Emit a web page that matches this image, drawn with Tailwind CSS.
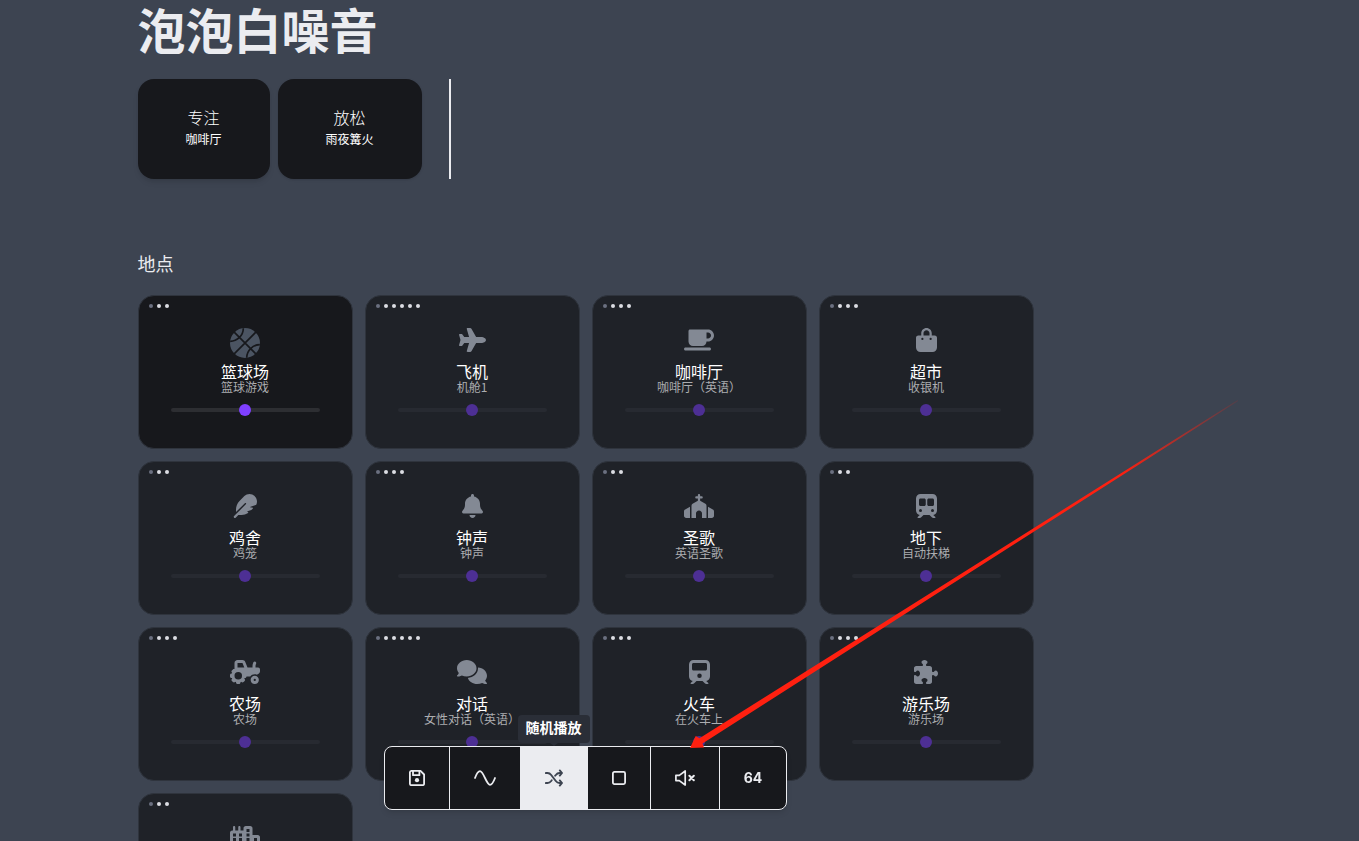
<!DOCTYPE html>
<html lang="zh-CN">
<head>
    <meta charset="UTF-8">
    <meta name="viewport" content="width=device-width, initial-scale=1.0">
    <title>泡泡白噪音</title>
    <script src="https://cdn.jsdelivr.net/npm/@tailwindcss/browser@4"></script>
</head>
<body class="relative min-h-screen overflow-x-hidden bg-[#3d4451] font-['Noto_Sans_CJK_SC',sans-serif] text-[#ebecf0]">
    <main class="mx-auto max-w-[1084px] pt-1 pb-28">
        <h1 class="text-5xl leading-[48px] font-bold">泡泡白噪音</h1>

        <!-- Presets -->
        <div class="mt-[27px] flex">
            <button class="h-[100px] rounded-2xl bg-[#17181c] px-12 pb-1 text-center text-white shadow-md">
                <span class="block text-base leading-6 font-light">专注</span>
                <span class="block text-xs leading-5">咖啡厅</span>
            </button>
            <button class="ml-2 h-[100px] rounded-2xl bg-[#17181c] px-12 pb-1 text-center text-white shadow-sm">
                <span class="block text-base leading-6 font-light">放松</span>
                <span class="block text-xs leading-5">雨夜篝火</span>
            </button>
            <div class="ml-[27px] w-0.5 bg-[#ebecf0]"></div>
        </div>

        <section class="mt-[70px] max-w-4xl">
            <h2 class="text-lg leading-7">地点</h2>
            <div id="sounds" class="mt-[18px] grid grid-cols-4 gap-3"></div>
        </section>
    </main>

    <!-- Player bar -->
    <div class="fixed inset-x-0 bottom-[31px] mx-auto max-w-[1084px]">
        <div class="flex max-w-4xl justify-center">
            <div class="flex h-16 rounded-lg border border-[#ebecf0] bg-[#17181c] shadow-md">
                <button aria-label="保存" class="px-6">
                    <svg class="h-4 w-4" viewBox="0 0 16 16" fill="none" stroke="currentColor" stroke-width="1.8" stroke-linejoin="round">
                        <path d="M2.3 .9h9.2l3.6 3.6v9.2a1.5 1.5 0 0 1-1.5 1.500H2.300a1.500 1.500 0 0 1-1.400-1.500V2.300A1.500 1.500 0 0 1 2.300 .9z"/>
                        <path d="M4 1v4.200h6.400V1"/>
                        <circle cx="8" cy="10.200" r="2.100" fill="currentColor" stroke="none"/>
                    </svg>
                </button>
                <button aria-label="波形" class="border-l border-[#ebecf0] px-6">
                    <svg class="h-4 w-[22px]" viewBox="0 0 22 16" fill="none" stroke="currentColor" stroke-width="1.8" stroke-linecap="round">
                        <path d="M1 8C2.5 4 4 1.2 6 1.2 9.5 1.2 12.5 14.8 16 14.8c2 0 3.5-2.8 5-6.8"/>
                    </svg>
                </button>
                <div class="relative flex">
                    <button aria-label="随机播放" class="border-l border-[#ebecf0] bg-[#ebecf0] px-6 text-[#3d4451]">
                        <svg class="h-[18px] w-[18px]" viewBox="0 0 18 18" fill="none" stroke="currentColor" stroke-width="1.9" stroke-linecap="round" stroke-linejoin="round">
                            <path d="M.9 4h1.6c1.7 0 2.8.8 3.7 2l4.6 6c.9 1.2 2 2 3.7 2H17M.9 14h1.6c1.7 0 2.8-.8 3.7-2l.5-.7M10.2 6.7l.6-.7c.9-1.2 2-2 3.7-2H17M14.8 1.4L17 4l-2.2 2.6M14.8 11.4L17 14l-2.2 2.6"/>
                        </svg>
                    </button>
                    <div role="tooltip" class="absolute bottom-full left-1/2 mb-1 -translate-x-1/2 rounded bg-[#2a2e37] px-2 pt-0.5 pb-1.5 text-sm leading-5 font-bold whitespace-nowrap text-white">
                        随机播放
                        <span class="absolute top-full left-1/2 -translate-x-1/2 border-x-4 border-t-[3px] border-x-transparent border-t-[#2a2e37]"></span>
                    </div>
                </div>
                <button aria-label="停止" class="border-l border-[#ebecf0] px-6">
                    <svg class="h-3.5 w-3.5" viewBox="0 0 14 14" fill="none" stroke="currentColor" stroke-width="1.8">
                        <rect x=".9" y=".9" width="12.2" height="12.2" rx="1.5"/>
                    </svg>
                </button>
                <button aria-label="静音" class="border-l border-[#ebecf0] px-6">
                    <svg class="h-4 w-5" viewBox="0 0 20 16" fill="none" stroke="currentColor" stroke-width="1.7" stroke-linejoin="round" stroke-linecap="round">
                        <path d="M.9 5.400h3.400L10.200 1v14l-5.900-4.400H.9z"/>
                        <path stroke-width="2" d="M14.400 5.800L18.800 10.200M18.800 5.800l-4.400 4.400"/>
                    </svg>
                </button>
                <button aria-label="音量" class="min-w-[67px] rounded-r-lg border-l border-[#ebecf0] font-[Inter,sans-serif] text-sm font-bold">64</button>
            </div>
        </div>
    </div>

    <!-- Pointer arrow -->
    <svg class="pointer-events-none absolute top-0 left-0 h-[841px] w-[1359px]" viewBox="0 0 1359 841" aria-hidden="true">
        <defs>
            <linearGradient id="arrowFade" gradientUnits="userSpaceOnUse" x1="1238" y1="400" x2="1120" y2="475">
                <stop offset="0" stop-color="#ff2010" stop-opacity=".1"/>
                <stop offset="1" stop-color="#ff2010"/>
            </linearGradient>
        </defs>
        <path fill="url(#arrowFade)" d="M690 748l5.700-12 3.800 2.300L1237.600 400l.6 1L702.500 743.500l1.500 4z"/>
    </svg>

    <!-- Icons -->
    <svg class="hidden">
        <symbol id="basketball" viewBox="0 0 90 90">
            <circle cx="45" cy="45" r="45"/>
            <path d="M12.500 12.500l65 65M77.500 12.500l-65 65M40 .5A40 40 0 0 1 .5 40M50 89.500A40 40 0 0 1 89.500 50" fill="none" stroke="#17181c" stroke-width="5"/>
        </symbol>
        <symbol id="plane" viewBox="0 0 576 512"><path d="M482.3 192c34.2 0 93.7 29 93.7 64c0 36-59.5 64-93.7 64l-116.6 0L265.2 495.9c-5.7 10-16.3 16.1-27.8 16.1l-56.2 0c-10.6 0-18.3-10.2-15.4-20.4l49-171.6L112 320 68.8 377.6c-3 4-7.8 6.4-12.8 6.4l-42 0c-7.8 0-14-6.3-14-14c0-1.3 .2-2.6 .5-3.9L32 256 .5 145.9c-.4-1.3-.5-2.6-.5-3.9c0-7.8 6.3-14 14-14l42 0c5 0 9.8 2.4 12.8 6.4L112 192l102.9 0-49-171.6C162.9 10.2 170.6 0 181.2 0l56.2 0c11.5 0 22.1 6.2 27.8 16.1L365.7 192l116.6 0z"/></symbol>
        <symbol id="coffee" viewBox="0 0 640 512"><path d="M96 64c0-17.7 14.3-32 32-32l320 0 64 0c70.7 0 128 57.3 128 128s-57.3 128-128 128l-32 0c0 53-43 96-96 96l-192 0c-53 0-96-43-96-96L96 64zM480 224l32 0c35.3 0 64-28.7 64-64s-28.7-64-64-64l-32 0 0 128zM32 416l512 0c17.7 0 32 14.3 32 32s-14.3 32-32 32L32 480c-17.7 0-32-14.3-32-32s14.3-32 32-32z"/></symbol>
        <symbol id="bag" viewBox="0 0 448 512"><path d="M160 112c0-35.3 28.7-64 64-64s64 28.7 64 64v48H160V112zm-48 48H48c-26.5 0-48 21.5-48 48V416c0 53 43 96 96 96H352c53 0 96-43 96-96V208c0-26.5-21.5-48-48-48H336V112C336 50.1 285.9 0 224 0S112 50.1 112 112v48zm24 48a24 24 0 1 1 0 48 24 24 0 1 1 0-48zm152 24a24 24 0 1 1 48 0 24 24 0 1 1 -48 0z"/></symbol>
        <symbol id="feather" viewBox="0 0 512 512"><path d="M278.5 215.6L23 471c-9.4 9.4-9.4 24.6 0 33.9s24.6 9.4 33.9 0l57-57h68c49.7 0 97.9-14.4 139-41c11.1-7.2 5.5-23-7.8-23c-5.1 0-9.2-4.1-9.2-9.2c0-4.1 2.7-7.6 6.5-8.8l81-24.3c2.5-.8 4.8-2.1 6.7-4l22.4-22.4c10.1-10.1 2.9-27.3-11.3-27.3l-32.2 0c-5.1 0-9.2-4.1-9.2-9.2c0-4.1 2.7-7.6 6.5-8.8l112-33.6c4-1.2 7.4-3.9 9.3-7.7C506.4 207.6 512 184.1 512 160c0-41-16.3-80.3-45.3-109.3l-5.5-5.5C432.3 16.3 393 0 352 0s-80.3 16.3-109.3 45.3L139 149C91 197 64 262.1 64 330v55.3L253.6 195.8c6.2-6.2 16.4-6.2 22.6 0c5.4 5.4 6.1 13.6 2.2 19.8z"/></symbol>
        <symbol id="bell" viewBox="0 0 448 512"><path d="M224 0c-17.7 0-32 14.3-32 32V51.2C119 66 64 130.6 64 208v18.8c0 47-17.3 92.4-48.5 127.6l-7.4 8.3c-8.4 9.4-10.4 22.9-5.3 34.4S19.4 416 32 416H416c12.6 0 24-7.4 29.2-18.9s3.1-25-5.3-34.4l-7.4-8.3C401.3 319.2 384 273.9 384 226.8V208c0-77.4-55-142-128-156.8V32c0-17.7-14.3-32-32-32zm45.3 493.3c12-12 18.7-28.3 18.7-45.3H224 160c0 17 6.7 33.3 18.7 45.3s28.3 18.7 45.3 18.7s33.3-6.7 45.3-18.7z"/></symbol>
        <symbol id="church" viewBox="0 0 640 512"><path d="M344 24c0-13.3-10.7-24-24-24s-24 10.7-24 24V48H264c-13.3 0-24 10.7-24 24s10.7 24 24 24h32v46.4L183.3 210c-14.5 8.7-23.3 24.3-23.3 41.2V512h96V416c0-35.3 28.7-64 64-64s64 28.7 64 64v96h96V251.2c0-16.9-8.8-32.5-23.3-41.2L344 142.4V96h32c13.3 0 24-10.7 24-24s-10.7-24-24-24H344V24zM24.9 330.3C9.5 338.8 0 354.9 0 372.4V464c0 26.5 21.5 48 48 48h80V273.6L24.9 330.3zM592 512c26.5 0 48-21.5 48-48V372.4c0-17.5-9.5-33.6-24.9-42.1L512 273.6V512h80z"/></symbol>
        <symbol id="subway" viewBox="0 0 448 512"><path d="M96 0C43 0 0 43 0 96V352c0 48 35.2 87.7 81.1 94.9l-46 46C28.1 499.9 33.1 512 43 512H82.7c8.5 0 16.6-3.4 22.6-9.4L160 448H288l54.6 54.6c6 6 14.1 9.4 22.6 9.4H405c10 0 15-12.1 7.9-19.1l-46-46c46-7.1 81.1-46.9 81.1-94.9V96c0-53-43-96-96-96H96zM64 128c0-17.7 14.3-32 32-32h80c17.7 0 32 14.3 32 32v96c0 17.7-14.3 32-32 32H96c-17.7 0-32-14.3-32-32V128zM272 96h80c17.7 0 32 14.3 32 32v96c0 17.7-14.3 32-32 32H272c-17.7 0-32-14.3-32-32V128c0-17.7 14.3-32 32-32zM64 352a32 32 0 1 1 64 0 32 32 0 1 1 -64 0zm288-32a32 32 0 1 1 0 64 32 32 0 1 1 0-64z"/></symbol>
        <symbol id="tractor" viewBox="0 0 640 512"><path d="M96 64c0-35.3 28.7-64 64-64H266.3c26.2 0 49.7 15.9 59.4 40.2L373.7 160H480V126.2c0-24.8 5.8-49.3 16.9-71.6l2.5-5c7.9-15.8 27.1-22.2 42.9-14.3s22.2 27.1 14.3 42.9l-2.5 5c-6.7 13.3-10.1 28-10.1 42.9V160h56c22.1 0 40 17.9 40 40v45.4c0 16.5-8.5 31.9-22.6 40.7l-43.3 27.1c-14.2-5.9-29.8-9.2-46.1-9.2c-39.3 0-74.1 18.9-96 48H352c0 17.7-14.3 32-32 32h-8.2c-1.7 4.8-3.7 9.5-5.8 14.1l5.8 5.8c12.5 12.5 12.5 32.8 0 45.3l-22.6 22.6c-12.5 12.5-32.8 12.5-45.3 0l-5.8-5.8c-4.6 2.2-9.3 4.1-14.1 5.8V480c0 17.7-14.3 32-32 32H160c-17.7 0-32-14.3-32-32v-8.2c-4.8-1.7-9.5-3.7-14.1-5.8l-5.8 5.8c-12.5 12.5-32.8 12.5-45.3 0L40.2 449.1c-12.5-12.5-12.5-32.8 0-45.3l5.8-5.8c-2.2-4.6-4.1-9.3-5.8-14.1H32c-17.7 0-32-14.3-32-32V320c0-17.7 14.3-32 32-32h8.2c1.7-4.8 3.7-9.5 5.8-14.1l-5.8-5.8c-12.5-12.5-12.5-32.8 0-45.3l22.6-22.6c9-9 21.9-11.5 33.1-7.6V64zm170.3 0H160v96H304.7L266.3 64zM176 256a80 80 0 1 0 0 160 80 80 0 1 0 0-160zM528 448a24 24 0 1 0 0-48 24 24 0 1 0 0 48zm0 64c-48.6 0-88-39.4-88-88s39.4-88 88-88s88 39.4 88 88s-39.4 88-88 88z"/></symbol>
        <symbol id="comments" viewBox="0 0 640 512"><path d="M208 352c114.9 0 208-78.8 208-176S322.9 0 208 0S0 78.8 0 176c0 38.6 14.7 74.3 39.6 103.4c-3.5 9.4-8.7 17.7-14.2 24.7c-4.8 6.2-9.7 11-13.3 14.3c-1.8 1.6-3.3 2.9-4.3 3.7c-.5 .4-.9 .7-1.1 .8l-.2 .2C1 327.2-1.4 334.4 .8 340.9S9.1 352 16 352c21.8 0 43.8-5.6 62.1-12.5c9.2-3.5 17.8-7.4 25.2-11.4C134.1 343.3 169.8 352 208 352zM448 176c0 112.3-99.1 196.9-216.5 207C255.8 457.4 336.4 512 432 512c38.2 0 73.9-8.7 104.7-23.9c7.5 4 16 7.9 25.2 11.4c18.3 6.9 40.3 12.5 62.1 12.5c6.9 0 13.1-4.5 15.2-11.1c2.1-6.6-.2-13.8-5.8-17.9l-.2-.2c-.2-.2-.6-.4-1.1-.8c-1-.8-2.5-2-4.3-3.7c-3.6-3.3-8.5-8.1-13.3-14.3c-5.5-7-10.7-15.4-14.2-24.7c24.9-29 39.6-64.7 39.6-103.4c0-92.8-84.9-168.9-192.6-175.5c.4 5.1 .6 10.3 .6 15.5z"/></symbol>
        <symbol id="train" viewBox="0 0 448 512"><path d="M96 0C43 0 0 43 0 96V352c0 48 35.2 87.7 81.1 94.9l-46 46C28.1 499.9 33.1 512 43 512H82.7c8.5 0 16.6-3.4 22.6-9.4L160 448H288l54.6 54.6c6 6 14.1 9.4 22.6 9.4H405c10 0 15-12.1 7.9-19.1l-46-46c46-7.1 81.1-46.9 81.1-94.9V96c0-53-43-96-96-96H96zM64 96c0-17.7 14.3-32 32-32H352c17.7 0 32 14.3 32 32v96c0 17.7-14.3 32-32 32H96c-17.7 0-32-14.3-32-32V96zM224 288a48 48 0 1 1 0 96 48 48 0 1 1 0-96z"/></symbol>
        <symbol id="puzzle" viewBox="0 0 512 512"><path d="M192 104.8c0-9.2-5.8-17.3-13.2-22.8C167.2 73.3 160 61.3 160 48c0-26.5 28.7-48 64-48s64 21.5 64 48c0 13.3-7.2 25.3-18.8 34c-7.4 5.5-13.2 13.6-13.2 22.8c0 12.8 10.4 23.2 23.2 23.2H336c26.5 0 48 21.5 48 48v56.8c0 12.8 10.4 23.2 23.2 23.2c9.2 0 17.3-5.8 22.8-13.2c8.7-11.6 20.7-18.8 34-18.8c26.5 0 48 28.7 48 64s-21.5 64-48 64c-13.3 0-25.3-7.2-34-18.8c-5.5-7.4-13.6-13.2-22.8-13.2c-12.8 0-23.2 10.4-23.2 23.2V464c0 26.5-21.5 48-48 48H279.2c-12.8 0-23.2-10.4-23.2-23.2c0-9.2 5.8-17.3 13.2-22.8c11.6-8.7 18.8-20.7 18.8-34c0-26.5-28.7-48-64-48s-64 21.5-64 48c0 13.3 7.2 25.3 18.8 34c7.4 5.5 13.2 13.6 13.2 22.8c0 12.8-10.4 23.2-23.2 23.2H48c-26.5 0-48-21.5-48-48V343.2C0 330.4 10.4 320 23.2 320c9.2 0 17.3 5.8 22.8 13.2C54.7 344.8 66.7 352 80 352c26.5 0 48-28.7 48-64s-21.5-64-48-64c-13.3 0-25.3 7.2-34 18.8C40.5 250.2 32.4 256 23.2 256C10.4 256 0 245.6 0 232.8V176c0-26.5 21.5-48 48-48H168.8c12.8 0 23.2-10.4 23.2-23.2z"/></symbol>
        <symbol id="city" viewBox="0 0 640 512"><path d="M480 48c0-26.5-21.5-48-48-48H336c-26.5 0-48 21.5-48 48V96H224V24c0-13.3-10.7-24-24-24s-24 10.7-24 24V96H112V24c0-13.3-10.7-24-24-24S64 10.7 64 24V96H48C21.5 96 0 117.5 0 144V464c0 26.5 21.5 48 48 48H592c26.5 0 48-21.5 48-48V240c0-26.5-21.5-48-48-48H480V48zM64 160h64v64H64zM192 160h64v64h-64zM64 256h64v64H64zM192 256h64v64h-64zM64 352h64v64H64zM192 352h64v64h-64zM352 64h64v64h-64zM352 160h64v64h-64zM352 256h64v64h-64zM512 256h64v64h-64zM512 352h64v64h-64z"/></symbol>
    </svg>

    <script>
        const sounds = [
            { icon: 'basketball', size: 'h-[30px] w-[30px]', title: '篮球场', detail: '篮球游戏', variants: 2, active: true },
            { icon: 'plane', size: 'h-6 w-[27px]', title: '飞机', detail: '机舱1', variants: 5 },
            { icon: 'coffee', size: 'h-6 w-[30px]', title: '咖啡厅', detail: '咖啡厅（英语）', variants: 3 },
            { icon: 'bag', size: 'h-6 w-[21px]', title: '超市', detail: '收银机', variants: 3 },
            { icon: 'feather', size: 'h-6 w-6', title: '鸡舍', detail: '鸡笼', variants: 2 },
            { icon: 'bell', size: 'h-6 w-[21px]', title: '钟声', detail: '钟声', variants: 3 },
            { icon: 'church', size: 'h-6 w-[30px]', title: '圣歌', detail: '英语圣歌', variants: 2 },
            { icon: 'subway', size: 'h-6 w-[21px]', title: '地下', detail: '自动扶梯', variants: 2 },
            { icon: 'tractor', size: 'h-6 w-[30px]', title: '农场', detail: '农场', variants: 3 },
            { icon: 'comments', size: 'h-6 w-[30px]', title: '对话', detail: '女性对话（英语）', variants: 5 },
            { icon: 'train', size: 'h-6 w-[21px]', title: '火车', detail: '在火车上', variants: 3 },
            { icon: 'puzzle', size: 'h-6 w-6', title: '游乐场', detail: '游乐场', variants: 3 },
            { icon: 'city', size: 'h-6 w-[30px]', title: '', detail: '', variants: 2 },
        ];

        document.getElementById('sounds').innerHTML = sounds.map(s => `
            <article class="min-h-[154px] rounded-2xl border border-[#2f343d] pt-2 pb-9 ${s.active ? 'bg-[#17181c]' : 'bg-[#1f2228]'}">
                <div class="flex gap-1 px-2.5">
                    <span class="h-1 w-1 rounded-full bg-[#6b7080]"></span>
                    ${'<span class="h-1 w-1 rounded-full bg-[#dcdde3]"></span>'.repeat(s.variants)}
                </div>
                <button class="mt-5 block w-full text-center">
                    <span class="flex h-[30px] justify-center ${s.active ? 'text-[#4b5462]' : 'text-[#838994]'}">
                        <svg class="${s.size}" fill="currentColor" fill-rule="evenodd"><use href="#${s.icon}"/></svg>
                    </span>
                    <span class="mt-[3px] block text-base leading-5 text-white">${s.title}</span>
                    <span class="block text-xs leading-3 text-[#acadb0]">${s.detail}</span>
                </button>
                <div class="mt-[15px] px-8">
                    <input type="range" min="0" max="100" value="50" aria-label="${s.title}音量"
                        class="block h-1 w-full appearance-none rounded-full [&::-webkit-slider-thumb]:h-3 [&::-webkit-slider-thumb]:w-3 [&::-webkit-slider-thumb]:appearance-none [&::-webkit-slider-thumb]:rounded-full ${s.active ? 'bg-[#2d2e32] [&::-webkit-slider-thumb]:bg-[#7f3fff]' : 'bg-[#272a31] [&::-webkit-slider-thumb]:bg-[#4d2f94]'}">
                </div>
            </article>`
        ).join('');
    </script>
</body>
</html>
